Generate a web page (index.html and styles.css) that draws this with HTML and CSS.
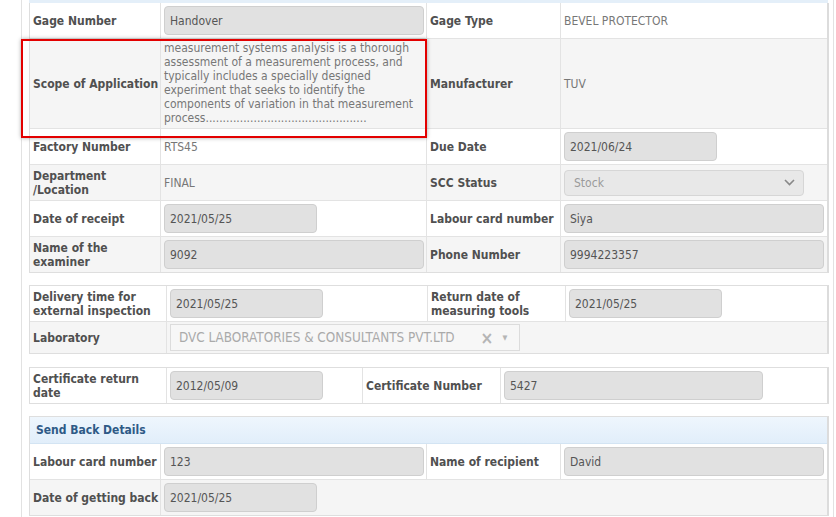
FILE: index.html
```html
<!DOCTYPE html>
<html>
<head>
<meta charset="utf-8">
<link rel="stylesheet" href="styles.css">
</head>
<body>
<div class="page">
  <div class="panel-tail"></div>
  <div class="table t1 no-top">
    <div class="row">
      <div class="lbl">Gage Number</div>
      <div class="val"><div class="field w260">Handover</div></div>
      <div class="lbl">Gage Type</div>
      <div class="val"><span class="txt">BEVEL PROTECTOR</span></div>
    </div>
    <div class="row alt scope">
      <div class="lbl">Scope of Application</div>
      <div class="val top"><div class="para">measurement systems analysis is a thorough assessment of a measurement process, and typically includes a specially designed experiment that seeks to identify the components of variation in that measurement process...............................................</div></div>
      <div class="lbl">Manufacturer</div>
      <div class="val"><span class="txt">TUV</span></div>
    </div>
    <div class="row">
      <div class="lbl">Factory Number</div>
      <div class="val"><span class="txt">RTS45</span></div>
      <div class="lbl">Due Date</div>
      <div class="val"><div class="field w153">2021/06/24</div></div>
    </div>
    <div class="row alt">
      <div class="lbl">Department<br>/Location</div>
      <div class="val"><span class="txt">FINAL</span></div>
      <div class="lbl">SCC Status</div>
      <div class="val"><div class="select w240"><span>Stock</span><svg class="chev" width="11" height="7" viewBox="0 0 11 7"><path d="M1 1l4.5 4.5L10 1" fill="none" stroke="#888" stroke-width="1.6"/></svg></div></div>
    </div>
    <div class="row">
      <div class="lbl">Date of receipt</div>
      <div class="val"><div class="field w153">2021/05/25</div></div>
      <div class="lbl">Labour card number</div>
      <div class="val"><div class="field w260">Siya</div></div>
    </div>
    <div class="row alt">
      <div class="lbl">Name of the<br>examiner</div>
      <div class="val"><div class="field w260">9092</div></div>
      <div class="lbl">Phone Number</div>
      <div class="val"><div class="field w260">9994223357</div></div>
    </div>
  </div>

  <div class="table t2 gap1">
    <div class="row">
      <div class="lbl">Delivery time for<br>external inspection</div>
      <div class="val"><div class="field w153">2021/05/25</div></div>
      <div class="lbl">Return date of<br>measuring tools</div>
      <div class="val"><div class="field w153">2021/05/25</div></div>
    </div>
    <div class="row alt lab">
      <div class="lbl">Laboratory</div>
      <div class="val"><div class="select2"><span class="s2text">DVC LABORATORIES &amp; CONSULTANTS PVT.LTD</span><span class="s2x">×</span><span class="s2arrow">▼</span></div></div>
    </div>
  </div>

  <div class="table t3 gap2">
    <div class="row">
      <div class="lbl">Certificate return<br>date</div>
      <div class="val"><div class="field w153">2012/05/09</div></div>
      <div class="lbl">Certificate Number</div>
      <div class="val"><div class="field w259">5427</div></div>
    </div>
  </div>

  <div class="table t1 gap3">
    <div class="head">Send Back Details</div>
    <div class="row">
      <div class="lbl">Labour card number</div>
      <div class="val"><div class="field w260">123</div></div>
      <div class="lbl">Name of recipient</div>
      <div class="val"><div class="field w260">David</div></div>
    </div>
    <div class="row alt wide">
      <div class="lbl">Date of getting back</div>
      <div class="val"><div class="field w153">2021/05/25</div></div>
    </div>
  </div>

  <div class="highlight"></div>
</div>
</body>
</html>
```

FILE: styles.css
```css
html, body {
  margin: 0;
  padding: 0;
  background: #fff;
}
body {
  font-family: "DejaVu Sans Condensed", "DejaVu Sans", sans-serif;
  font-size: 12px;
  color: #555;
  height: 517px;
  overflow: hidden;
}
.page {
  position: relative;
  margin-left: 21px;
  width: 799px;
  height: 517px;
  border-left: 1px solid #e2e2e2;
  border-right: 1px solid #e2e2e2;
  padding: 0 5px 0 7px;
}
.panel-tail {
  height: 3px;
  background: #e4eff9;
  width: 799px;
}
.table {
  width: 797px;
  border: 1px solid #dedede;
  border-right: 2px solid #dcdcdc;
  box-sizing: content-box;
}
.no-top { border-top: 0; }
.gap1 { margin-top: 12px; }
.gap2 { margin-top: 13px; }
.gap3 { margin-top: 12px; }
.row {
  display: grid;
  height: 35px;
  border-bottom: 1px solid #e3e3e3;
  background: #fff;
}
.row:last-child { border-bottom: 0; }
.row.alt { background: #f5f5f5; }
.t1 .row { grid-template-columns: 131px 266px 134px 266px; }
.t1 .row.wide { grid-template-columns: 131px 666px; }
.t2 .row { grid-template-columns: 137px 261px 138px 261px; }
.t3 .row { grid-template-columns: 137px 196px 138px 326px; }
.t2 .row.lab { grid-template-columns: 137px 660px; height: 31px; }
.row.scope { height: 89px; }
.lbl, .val {
  display: flex;
  align-items: center;
  border-right: 1px solid #e3e3e3;
  overflow: hidden;
}
.row > div:last-child { border-right: 0; }
.lbl {
  padding-left: 3px;
  font-weight: bold;
  line-height: 14px;
  color: #505050;
}
.val { padding-left: 3px; }
.val.top { align-items: flex-start; }
.txt { color: #777; }
.para {
  color: #777;
  line-height: 14px;
  padding-top: 2px;
  width: 252px;
}
.field {
  box-sizing: border-box;
  height: 29px;
  background: #e1e1e1;
  border: 1px solid #cfcfcf;
  border-radius: 4px;
  padding-left: 5px;
  display: flex;
  align-items: center;
  color: #555;
}
.w260 { width: 260px; }
.w259 { width: 259px; }
.w153 { width: 153px; }
.w240 { width: 240px; }
.select {
  box-sizing: border-box;
  height: 26px;
  background: #e8e8e8;
  border: 1px solid #d6d6d6;
  border-radius: 4px;
  padding: 0 8px 0 9px;
  display: flex;
  align-items: center;
  justify-content: space-between;
  color: #9a9a9a;
}
.select2 {
  box-sizing: border-box;
  width: 350px;
  height: 27px;
  background: #f7f7f7;
  border: 1px solid #dcdcdc;
  display: flex;
  align-items: center;
  padding-left: 8px;
  color: #aaa;
  font-size: 13.4px;
}
.s2text { flex: 0 0 auto; }
.s2x {
  margin-left: 26px;
  font-size: 17px;
  font-weight: bold;
  color: #b5b5b5;
}
.s2arrow {
  margin-left: 9px;
  font-size: 7px;
  color: #b5b5b5;
}
.head {
  height: 26px;
  border-bottom: 1px solid #d3e4f3;
  background: linear-gradient(#eef6fd, #e1eefa);
  display: flex;
  align-items: center;
  padding-left: 6px;
  font-weight: bold;
  color: #2e5a86;
}
.highlight {
  position: absolute;
  left: -1px;
  top: 39px;
  width: 402px;
  height: 95px;
  border: 2px solid #e30000;
  box-shadow: 0 0 4px rgba(0,0,0,0.35);
  pointer-events: none;
}
```
